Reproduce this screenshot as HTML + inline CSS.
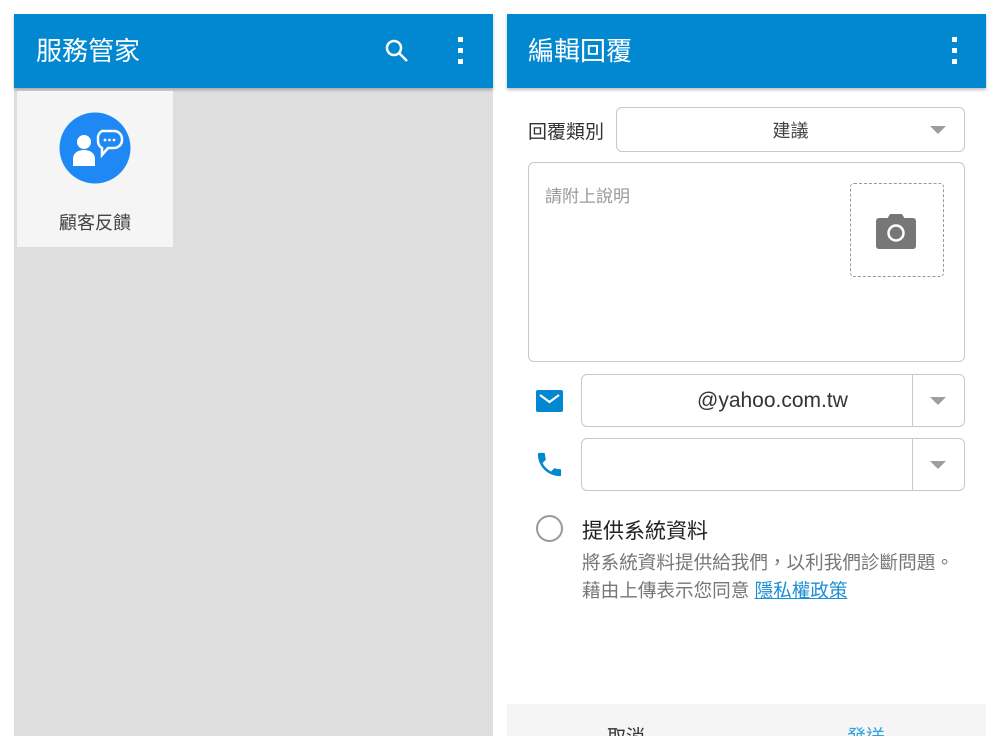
<!DOCTYPE html>
<html><head><meta charset="utf-8"><style>
*{margin:0;padding:0;box-sizing:border-box}
body{width:1000px;height:750px;background:#fff;position:relative;overflow:hidden;font-family:"Liberation Sans","Noto Sans CJK TC",sans-serif}
.abs{position:absolute}
.bar{background:#0288d1;height:74px;top:14px;box-shadow:0 2px 3px rgba(0,0,0,.25)}
.title{color:#fff;font-size:26px;top:31px}
.dot{width:5px;height:5px;background:#fff}
.box{border:1px solid #c8c8c8;border-radius:6px;background:#fff}
.tri{width:0;height:0;border-left:8px solid transparent;border-right:8px solid transparent;border-top:8px solid #9e9e9e}
</style></head><body>
<div class="abs" style="left:14px;top:88px;width:479px;height:648px;background:#dedede"></div>
<div class="abs bar" style="left:14px;width:479px"></div>
<div class="abs title" style="left:36px">服務管家</div>
<svg class="abs" style="left:383px;top:37px" width="28" height="28" viewBox="0 0 28 28"><circle cx="11" cy="11" r="7" fill="none" stroke="#fff" stroke-width="2.5"/><path d="M16 16l8 8" stroke="#fff" stroke-width="2.5"/></svg>
<div class="abs dot" style="left:458px;top:37px"></div><div class="abs dot" style="left:458px;top:48px"></div><div class="abs dot" style="left:458px;top:59px"></div>
<div class="abs" style="left:17px;top:91px;width:156px;height:156px;background:#f5f5f5"></div>
<svg class="abs" style="left:59px;top:112px" width="72" height="72" viewBox="0 0 72 72"><circle cx="36" cy="36" r="35.5" fill="#1e88f5"/><circle cx="25" cy="30" r="7" fill="#fff"/><path d="M14 54v-7c0-6 5-9 11-9s11 3 11 9v7z" fill="#fff"/><path d="M43 19h12a8 8 0 0 1 8 8v1a8 8 0 0 1-8 8h-6l-6 7v-7a8 8 0 0 1-4-7v-2a8 8 0 0 1 4-8z" fill="none" stroke="#fff" stroke-width="2.5"/><circle cx="46" cy="28" r="1.4" fill="#fff"/><circle cx="50.5" cy="28" r="1.4" fill="#fff"/><circle cx="55" cy="28" r="1.4" fill="#fff"/></svg>
<div class="abs" style="left:17px;top:209px;width:156px;text-align:center;font-size:18px;color:#444">顧客反饋</div>
<div class="abs bar" style="left:507px;width:479px"></div>
<div class="abs title" style="left:528px">編輯回覆</div>
<div class="abs dot" style="left:952px;top:37px"></div><div class="abs dot" style="left:952px;top:48px"></div><div class="abs dot" style="left:952px;top:59px"></div>
<div class="abs" style="left:528px;top:117px;font-size:19px;color:#333">回覆類別</div>
<div class="abs box" style="left:616px;top:107px;width:349px;height:45px"></div>
<div class="abs" style="left:616px;top:117px;width:349px;text-align:center;font-size:18px;color:#444">建議</div>
<div class="abs tri" style="left:930px;top:126px"></div>
<div class="abs box" style="left:528px;top:162px;width:437px;height:200px"></div>
<div class="abs" style="left:545px;top:182px;font-size:17px;color:#999">請附上說明</div>
<div class="abs" style="left:850px;top:183px;width:94px;height:94px;border:1.5px dashed #999;border-radius:4px"></div>
<svg class="abs" style="left:875px;top:212px" width="42" height="38" viewBox="0 0 42 38"><rect x="1" y="6" width="40" height="31" rx="3" fill="#777"/><path d="M12 7l3-5h12l3 5z" fill="#777"/><circle cx="21" cy="21" r="7.5" fill="none" stroke="#fff" stroke-width="2.5"/></svg>
<svg class="abs" style="left:536px;top:390px" width="28" height="22" viewBox="0 0 28 22"><rect x="0" y="0" width="27" height="22" rx="2" fill="#0288d1"/><path d="M4 5l9.5 7 9.5-7" fill="none" stroke="#fff" stroke-width="2.2"/></svg>
<div class="abs box" style="left:581px;top:374px;width:384px;height:53px"></div>
<div class="abs" style="left:912px;top:375px;width:1px;height:51px;background:#c8c8c8"></div>
<div class="abs" style="left:581px;top:389px;width:331px;font-size:21px;color:#333;padding-left:116px">@yahoo.com.tw</div>
<div class="abs tri" style="left:930px;top:397px"></div>
<svg class="abs" style="left:534px;top:449px" width="31" height="31" viewBox="0 0 24 24"><path fill="#0288d1" d="M6.6 10.8c1.4 2.8 3.8 5.1 6.6 6.6l2.2-2.2c.3-.3.7-.4 1-.2 1.1.4 2.3.6 3.6.6.6 0 1 .4 1 1V20c0 .6-.4 1-1 1C10.6 21 3 13.4 3 4c0-.6.4-1 1-1h3.5c.6 0 1 .4 1 1 0 1.3.2 2.5.6 3.6.1.3 0 .7-.2 1z"/></svg>
<div class="abs box" style="left:581px;top:438px;width:384px;height:53px"></div>
<div class="abs" style="left:912px;top:439px;width:1px;height:51px;background:#c8c8c8"></div>
<div class="abs tri" style="left:930px;top:461px"></div>
<div class="abs" style="left:536px;top:515px;width:27px;height:27px;border:2.5px solid #999;border-radius:50%"></div>
<div class="abs" style="left:582px;top:515px;font-size:21px;color:#222">提供系統資料</div>
<div class="abs" style="left:582px;top:549px;font-size:18.6px;color:#777;line-height:28px;white-space:nowrap">將系統資料提供給我們，以利我們診斷問題。<br>藉由上傳表示您同意 <span style="color:#1a8fd6;text-decoration:underline">隱私權政策</span></div>
<div class="abs" style="left:507px;top:704px;width:479px;height:32px;background:#f5f5f5;overflow:hidden">
<div class="abs" style="left:100px;top:18px;font-size:19px;color:#333">取消</div>
<div class="abs" style="left:340px;top:18px;font-size:19px;color:#2aa0e6">發送</div>
</div>
</body></html>
